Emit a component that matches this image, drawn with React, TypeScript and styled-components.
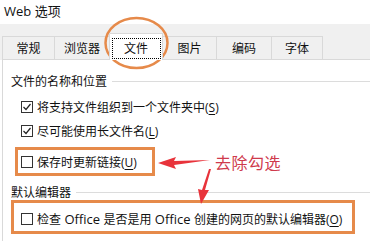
import React from 'react';
import styled, { createGlobalStyle } from 'styled-components';

const GlobalStyle = createGlobalStyle`
  html, body {
    margin: 0;
    padding: 0;
    background: #fff;
  }
  body {
    font-family: "Open Sans", "Noto Sans CJK SC", sans-serif;
    color: #111;
  }
`;

const Window = styled.div`
  position: relative;
  width: 370px;
  height: 241px;
  overflow: hidden;
  background: #fff;
  display: flex;
  flex-direction: column;
`;

const TitleBar = styled.div`
  height: 24px;
  display: flex;
  align-items: center;
  padding-left: 4px;
  font-size: 13px;
  padding-bottom: 4px;
  box-sizing: border-box;
`;

const TabStrip = styled.div`
  height: 36px;
  background: #f0f0f0;
  display: flex;
  align-items: flex-end;
  padding-left: 3px;
  box-sizing: border-box;
`;

const Tab = styled.div<{ $w: number; $active?: boolean }>`
  width: ${(p) => p.$w}px;
  height: ${(p) => (p.$active ? 27 : 24)}px;
  box-sizing: border-box;
  display: flex;
  align-items: center;
  justify-content: center;
  font-size: 12px;
  background: ${(p) => (p.$active ? '#fff' : '#f0f0f0')};
  border: 1px solid #d9d9d9;
  border-bottom: ${(p) => (p.$active ? 'none' : '1px solid #d9d9d9')};
  margin-left: -1px;
  position: relative;
  z-index: ${(p) => (p.$active ? 1 : 0)};
  padding-top: ${(p) => (p.$active ? 2 : 0)}px;
`;

const FocusBox = styled.span`
  display: flex;
  align-items: center;
  justify-content: center;
  width: 49px;
  height: 21px;
  border: 1px dotted #000;
  box-sizing: border-box;
`;

const Panel = styled.div`
  flex: 1;
  margin-left: 2px;
  margin-top: -1px;
  border-left: 1px solid #d9d9d9;
  border-top: 1px solid #d9d9d9;
  display: flex;
  flex-direction: column;
  font-size: 12px;
`;

const GroupHeader = styled.div<{ $top: number }>`
  display: flex;
  align-items: center;
  height: 16px;
  margin-top: ${(p) => p.$top}px;
  padding-left: 8px;
  &::after {
    content: '';
    flex: 1;
    height: 1px;
    background: #dcdcdc;
    margin-left: 5px;
  }
`;

const Row = styled.div<{ $top?: number; $left?: number }>`
  display: flex;
  align-items: center;
  height: 16px;
  margin-top: ${(p) => p.$top ?? 0}px;
  margin-left: ${(p) => p.$left ?? 0}px;
  white-space: pre;
`;

const Box = styled.span`
  width: 12px;
  height: 12px;
  box-sizing: border-box;
  border: 1px solid #333;
  display: flex;
  align-items: center;
  justify-content: center;
  margin-right: 4px;
  background: #fff;
`;

const Key = styled.u`
  text-underline-offset: 2px;
`;

const Latin = styled.span`
  font-size: 13px;
`;

const NoteLine = styled.div`
  display: flex;
  align-items: center;
  margin-top: 8px;
`;

const Highlight = styled.div<{ $left: number; $w: number; $pad: string }>`
  margin-left: ${(p) => p.$left}px;
  width: ${(p) => p.$w}px;
  box-sizing: border-box;
  border: 3px solid #e68a4a;
  padding: ${(p) => p.$pad};
`;

const Note = styled.span`
  margin-left: 60px;
  font-size: 16px;
  color: #cf3a4c;
  letter-spacing: 0.5px;
`;

const Overlay = styled.svg`
  position: absolute;
  left: 0;
  top: 0;
  pointer-events: none;
`;

const Check: React.FC<{ on?: boolean }> = ({ on }) => (
  <Box>
    {on && (
      <svg width="10" height="10" viewBox="0 0 10 10">
        <polyline points="1.5,5 4,7.5 8.5,2" fill="none" stroke="#222" strokeWidth="1.2" />
      </svg>
    )}
  </Box>
);

const tabs = [
  { label: '常规', w: 53 },
  { label: '浏览器', w: 56 },
  { label: '文件', w: 54, active: true },
  { label: '图片', w: 55 },
  { label: '编码', w: 56 },
  { label: '字体', w: 52 },
];

const App: React.FC = () => {
  return (
    <Window>
      <GlobalStyle />
      <TitleBar>Web 选项</TitleBar>
      <TabStrip>
        {tabs.map((t) => (
          <Tab key={t.label} $w={t.w} $active={t.active}>
            {t.active ? <FocusBox>{t.label}</FocusBox> : t.label}
          </Tab>
        ))}
      </TabStrip>
      <Panel>
        <GroupHeader $top={13}>文件的名称和位置</GroupHeader>
        <Row $top={10} $left={18}>
          <Check on />
          将支持文件组织到一个文件夹中(<Key>S</Key>)
        </Row>
        <Row $top={8} $left={18}>
          <Check on />
          尽可能使用长文件名(<Key>L</Key>)
        </Row>
        <NoteLine>
          <Highlight $left={12} $w={140} $pad="4px 3px 3px">
            <Row>
              <Check />
              保存时更新链接(<Key>U</Key>)
            </Row>
          </Highlight>
          <Note>去除勾选</Note>
        </NoteLine>
        <GroupHeader $top={8}>默认编辑器</GroupHeader>
        <Highlight $left={8} $w={344} $pad="8px 7px 4px">
          <Row>
            <Check />
            检查<Latin> Office </Latin>是否是用<Latin> Office </Latin>创建的网页的默认编辑器(<Key>O</Key>)
          </Row>
        </Highlight>
      </Panel>
      <Overlay width="370" height="241" viewBox="0 0 370 241">
        <ellipse cx="136.5" cy="43" rx="31" ry="25" fill="none" stroke="#e68a4a" strokeWidth="2.5" />
        <polygon points="158,163 176,157 174,161 210,160 174,165 176,169" fill="#e8333b" />
        <polygon points="211,169 205,190 209,190 201,204 198,189 202,190 209,169" fill="#e8333b" />
      </Overlay>
    </Window>
  );
};

export default App;
